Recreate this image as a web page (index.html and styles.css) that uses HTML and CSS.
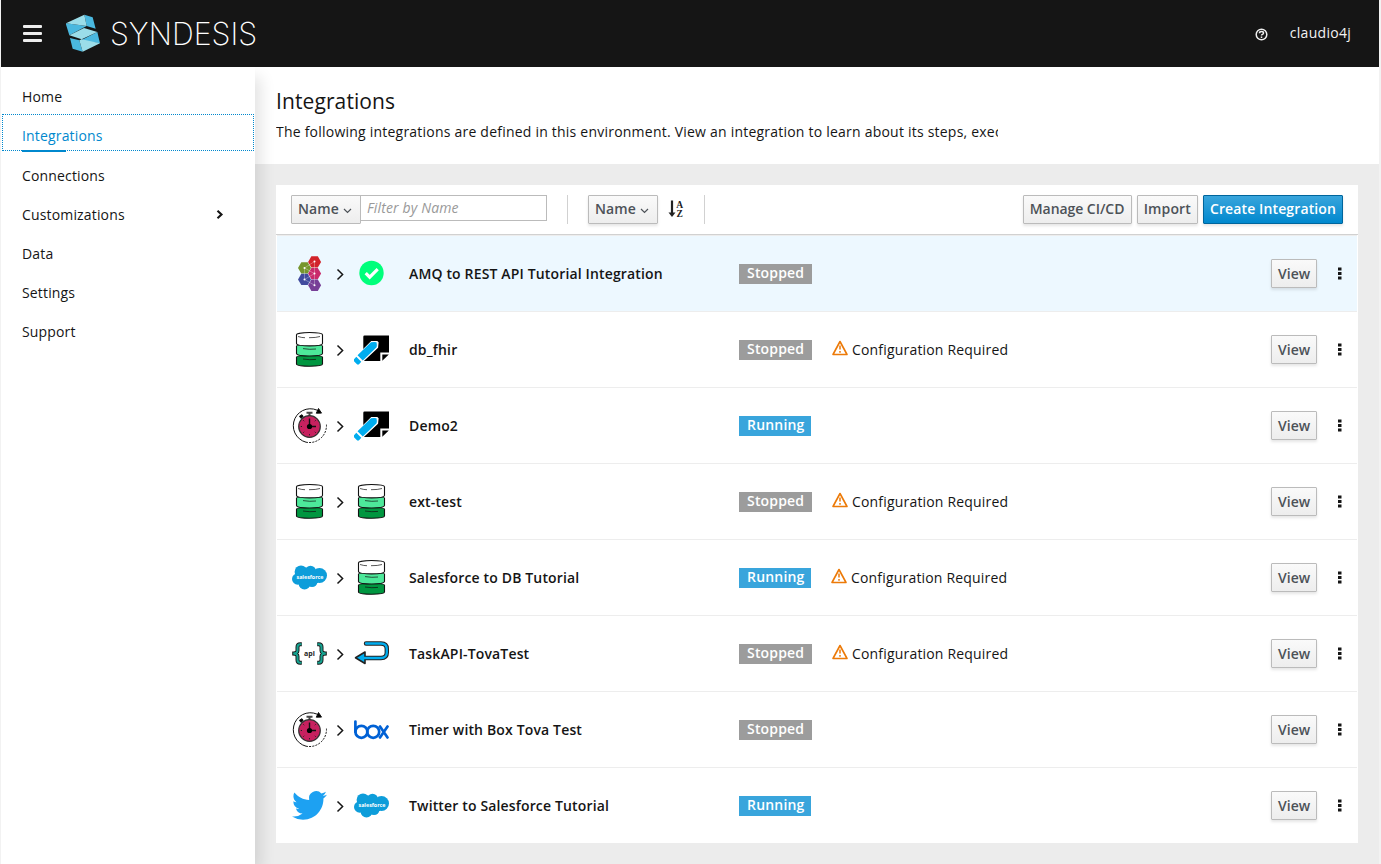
FILE: index.html
```html
<!DOCTYPE html>
<html lang="en">
<head>
<meta charset="utf-8">
<title>Syndesis</title>
<link rel="stylesheet" href="styles.css">
</head>
<body>
<svg class="defs" aria-hidden="true">
  <symbol id="db" viewBox="0 0 35 35">
    <g stroke="#111" stroke-width="1.100">
      <path d="M4.500 25c0-2 26-2 26 0v7c0 3-26 3-26 0z" fill="#009640"/>
      <path d="M4.500 14c0-2 26-2 26 0v7.500c0 3.300-26 3.300-26 0z" fill="#4de89a"/>
      <path d="M4.500 2.800c0-3 26-3 26 0v8.700c0 3.200-26 3.200-26 0z" fill="#fff"/>
      <path d="M6 4.500q4 1.300 7 1.200M17 5.700q7 .1 11-1.200M11 16.600q7 1.200 13 .4M11 27q7 1.200 13 .4" fill="none" stroke-width=".7"/>
    </g>
  </symbol>
  <symbol id="amq" viewBox="0 0 35 35">
    <path d="M3.300 0h6.400L13 5.700l-3.300 5.700H3.300L0 5.700z" transform="translate(16.100 .2)" fill="#d2232a"/>
    <path d="M3.300 0h6.400L13 5.700l-3.300 5.700H3.300L0 5.700z" transform="translate(6 6.200)" fill="#76962d"/>
    <path d="M3.300 0h6.400L13 5.700l-3.300 5.700H3.300L0 5.700z" transform="translate(16.100 11.900)" fill="#c92a6b"/>
    <path d="M3.300 0h6.400L13 5.700l-3.300 5.700H3.300L0 5.700z" transform="translate(6 17.700)" fill="#414b9e"/>
    <path d="M3.300 0h6.400L13 5.700l-3.300 5.700H3.300L0 5.700z" transform="translate(16.100 23.500)" fill="#773f97"/>
    <path d="M22.500 5.500L12.500 12v11.500l10 5.700v-11.500l-10-5.700M22.500 5.500v12l-10 6" fill="none" stroke="#fff" stroke-opacity=".5" stroke-width=".6"/>
    <g fill="#fff"><circle cx="22.500" cy="5.500" r="1"/><circle cx="12.500" cy="12" r="1"/><circle cx="22.500" cy="17.600" r="1"/><circle cx="12.500" cy="23.500" r="1"/><circle cx="22.500" cy="29.200" r="1"/></g>
  </symbol>
  <symbol id="ok" viewBox="0 0 35 35">
    <circle cx="17.500" cy="17" r="12.200" fill="#00ff7b"/>
    <path d="M11.700 17.200l4 4 8-8" fill="none" stroke="#fff" stroke-width="3.200"/>
  </symbol>
  <symbol id="log" viewBox="0 0 35 35">
    <path d="M10.500 3.500Q9.300 3.500 9.300 4.700V29h17V20.500h8.700V3.500z"/>
    <path d="M28.300 28.700v-6.300h6.500z"/>
    <path d="M0 27.500L5 22l12.500-12.500h5.500l1 1-.5 5L10 28l-5 5z" fill="#fff" stroke="#fff" stroke-width="1.200"/>
    <path d="M0 27.200l2.300-2.400 5 5-2.300 2.400q-1 .9-2 0L0 29.300zM3.500 23.300L17 10.300q3-.6 5.500-.1.700 2.500.1 5.100L8.800 28.500z" fill="#00adef"/>
  </symbol>
  <symbol id="timer" viewBox="0 0 35 35">
    <path d="M28.300 4A17 17 0 1 0 14 34.200" fill="none" stroke="#111" stroke-width="1"/>
    <path d="M14 34.200A17 17 0 0 0 34.400 16" fill="none" stroke="#111" stroke-width="1" stroke-dasharray="2 1.200"/>
    <path d="M26.500 .5l3 4.600-5.200.1zM7.500 8.200l2.500-1.500 1.200 1.800L9 10.500z" stroke="#111"/>
    <path d="M14.500 4.800h6M17.500 5v3" stroke="#444" stroke-width="2"/>
    <circle cx="17.500" cy="18.500" r="10.800" fill="#c7215f" stroke="#333" stroke-width="1.200"/>
    <path d="M17.500 10.500v8h6.500" fill="none" stroke="#111" stroke-width="1.400"/>
    <circle cx="17.500" cy="18.500" r="2.600"/>
    <path d="M17.500 27.300v-1.200M8.800 18.500H10M11.300 12.300l.9.900M23.700 12.300l-.9.900M11.300 24.700l.9-.9M23.700 24.700l-.9-.9" stroke="#222"/>
  </symbol>
  <symbol id="sf" viewBox="0 0 35 35">
    <g fill="#0d9dda"><circle cx="9" cy="11.800" r="6.400"/><circle cx="18.500" cy="11.200" r="5.500"/><circle cx="27.500" cy="15.500" r="7.500"/><circle cx="5.800" cy="19" r="5.800"/><circle cx="12.500" cy="23.500" r="5.900"/><circle cx="20" cy="21.500" r="5.500"/><path d="M8 10h18v13H8z"/></g>
    <text x="18" y="18.500" text-anchor="middle" textLength="27" lengthAdjust="spacingAndGlyphs" class="t-sf">salesforce</text>
  </symbol>
  <symbol id="api" viewBox="0 0 35 35">
    <g fill="none" stroke="#1a1a1a" stroke-width="4"><path d="M9.800 8.300H8.200Q5.500 8.300 5.500 11v3.500q0 3-5.300 3 5.300 0 5.300 3V24q0 2.700 2.700 2.700h1.600M25.200 8.300h1.600q2.700 0 2.700 2.700v3.500q0 3 5.300 3-5.300 0-5.300 3V24q0 2.700-2.700 2.700h-1.600"/></g>
    <g fill="none" stroke="#16a391" stroke-width="2.100"><path d="M9.500 8.300H8.200Q5.500 8.300 5.500 11v3.500q0 3-4.300 3 4.300 0 4.300 3V24q0 2.700 2.700 2.700h1.300M25.500 8.300h1.300q2.700 0 2.700 2.700v3.500q0 3 4.300 3-4.300 0-4.300 3V24q0 2.700-2.700 2.700h-1.300"/></g>
    <text x="17.500" y="20" text-anchor="middle" class="t-api">api</text>
  </symbol>
  <symbol id="ret" viewBox="0 0 35 35">
    <path d="M12 7.500h15q5.800 0 5.800 5.500v3.500q0 5.500-5.800 5.500H10" fill="none" stroke="#222" stroke-width="4.400" stroke-linecap="round"/>
    <path d="M11 16v11.500L1.500 21.800z" fill="#00adef" stroke="#222" stroke-width="1.600" stroke-linejoin="round"/>
    <path d="M12 7.500h15q5.800 0 5.800 5.500v3.500q0 5.500-5.800 5.500H10" fill="none" stroke="#00adef" stroke-width="2.300" stroke-linecap="round"/>
  </symbol>
  <symbol id="box" viewBox="0 0 35 35">
    <g fill="none" stroke="#0061d5" stroke-width="2.700" stroke-linecap="round"><path d="M1.400 9.500v10.500"/><circle cx="7.400" cy="19.800" r="6"/><circle cx="19.200" cy="19.800" r="6"/><path d="M26 14.500l7.500 11M33.500 14.500l-7.500 11"/></g>
  </symbol>
  <symbol id="tw" viewBox="0 0 24 24">
    <path d="M23.950 4.570a10 10 0 0 1-2.820.77 4.960 4.960 0 0 0 2.160-2.720c-.95.550-2 .95-3.130 1.180a4.920 4.920 0 0 0-8.380 4.480C7.690 8.100 4.070 6.130 1.640 3.160a4.820 4.820 0 0 0-.67 2.480c0 1.710.87 3.210 2.190 4.100a4.900 4.900 0 0 1-2.230-.62v.06a4.920 4.920 0 0 0 3.950 4.830 5 5 0 0 1-2.210.08 4.940 4.940 0 0 0 4.600 3.420A9.870 9.870 0 0 1 0 19.540a13.990 13.990 0 0 0 7.550 2.210c9.050 0 14-7.500 14-13.980 0-.21 0-.42-.02-.63a9.940 9.940 0 0 0 2.460-2.550z" fill="#1da1f2"/>
  </symbol>
  <symbol id="chev" viewBox="0 0 8 13"><path d="M1.500 1.500L6.600 6.500l-5.100 5" fill="none" stroke="#151515" stroke-width="1.500"/></symbol>
  <symbol id="down" viewBox="0 0 9 6"><path d="M1 1l3.500 3.500L8 1" fill="none" stroke="#4d5258" stroke-width="1.200"/></symbol>
  <symbol id="warn" viewBox="0 0 16 16"><path d="M8 1.500L15 14.500H1z" fill="none" stroke="#ec7a08" stroke-width="1.600" stroke-linejoin="round"/><path d="M8 5.500v4M8 11v1.700" stroke="#ec7a08" stroke-width="1.500"/></symbol>
  <symbol id="dots" viewBox="0 0 4 13"><path d="M0 .5h3.500v3H0zM0 5h3.500v3H0zM0 9.500h3.500v3H0z" fill="#151515"/></symbol>
</svg>

<div class="page">
  <header class="masthead">
    <div class="burger"><i></i><i></i><i></i></div>
    <svg class="logo" width="200" height="41" viewBox="0 0 200 41">
      <g transform="translate(-6 -5) scale(.3333)">
        <path d="M73 20l25 8 9 34-27-8zM17 46l63 8-52 28zM30 90l28 7 10 34-30-9zM112 72l8 34-60-8z" fill="#4ab8df"/>
        <path d="M17 46l56-26 7 34zM28 82l44-22 40 12-47 22zM58 97l7-3 55 12-52 25z" fill="#9bdde9"/>
      </g>
      <text x="44" y="31.500" textLength="147" lengthAdjust="spacingAndGlyphs" class="t-logo">SYNDESIS</text>
    </svg>
    <svg class="help" width="13" height="13" viewBox="0 0 13 13"><circle cx="6.500" cy="6.500" r="5.300" fill="none" stroke="#eee" stroke-width="1.500"/><path d="M4.500 5.200q0-1.700 2-1.700t2 1.500q0 1-1.100 1.400-.9.400-.9 1.100M6.500 8.500v1.500" fill="none" stroke="#eee" stroke-width="1.500"/></svg>
    <span class="user">claudio4j</span>
  </header>
  <div class="body">
    <nav class="sidebar">
      <a>Home</a>
      <a class="current">Integrations</a>
      <a>Connections</a>
      <a>Customizations<svg width="8" height="9" viewBox="0 0 8 9"><path d="M1.500 .8l4 3.700-4 3.700" fill="none" stroke="#151515" stroke-width="2.100"/></svg></a>
      <a>Data</a>
      <a>Settings</a>
      <a>Support</a>
    </nav>
    <main class="main">
      <section class="intro">
        <h1>Integrations</h1>
        <p>The following integrations are defined in this environment. View an integration to learn about its steps, exec</p>
      </section>
      <section class="card">
        <div class="toolbar">
          <button class="btn flat">Name<svg width="9" height="6"><use href="#down"/></svg></button>
          <input class="filter" placeholder="Filter by Name">
          <span class="rule"></span>
          <button class="btn">Name<svg width="9" height="6"><use href="#down"/></svg></button>
          <svg class="sort" width="17" height="18" viewBox="0 0 17 18"><path d="M4 .5V14" stroke="#222" stroke-width="2.200"/><path d="M.500 12.500h7L4 17z" fill="#222"/><text x="8.300" y="8" class="t-sort">A</text><text x="8.500" y="17" class="t-sort">Z</text></svg>
          <span class="rule"></span>
          <div class="actions">
            <button class="btn manage">Manage CI/CD</button>
            <button class="btn">Import</button>
            <button class="btn primary">Create Integration</button>
          </div>
        </div>
        <div class="row selected"><div class="flow"><svg><use href="#amq"/></svg><svg class="chev"><use href="#chev"/></svg><svg><use href="#ok"/></svg></div><b>AMQ to REST API Tutorial Integration</b><div class="state"><span class="tag">Stopped</span></div><button class="btn">View</button><svg class="dots"><use href="#dots"/></svg></div>
        <div class="row"><div class="flow"><svg><use href="#db"/></svg><svg class="chev"><use href="#chev"/></svg><svg><use href="#log"/></svg></div><b>db_fhir</b><div class="state"><span class="tag">Stopped</span><svg class="warn"><use href="#warn"/></svg>Configuration Required</div><button class="btn">View</button><svg class="dots"><use href="#dots"/></svg></div>
        <div class="row"><div class="flow"><svg><use href="#timer"/></svg><svg class="chev"><use href="#chev"/></svg><svg><use href="#log"/></svg></div><b>Demo2</b><div class="state"><span class="tag running">Running</span></div><button class="btn">View</button><svg class="dots"><use href="#dots"/></svg></div>
        <div class="row"><div class="flow"><svg><use href="#db"/></svg><svg class="chev"><use href="#chev"/></svg><svg><use href="#db"/></svg></div><b>ext-test</b><div class="state"><span class="tag">Stopped</span><svg class="warn"><use href="#warn"/></svg>Configuration Required</div><button class="btn">View</button><svg class="dots"><use href="#dots"/></svg></div>
        <div class="row"><div class="flow"><svg><use href="#sf"/></svg><svg class="chev"><use href="#chev"/></svg><svg><use href="#db"/></svg></div><b>Salesforce to DB Tutorial</b><div class="state"><span class="tag running">Running</span><svg class="warn"><use href="#warn"/></svg>Configuration Required</div><button class="btn">View</button><svg class="dots"><use href="#dots"/></svg></div>
        <div class="row"><div class="flow"><svg><use href="#api"/></svg><svg class="chev"><use href="#chev"/></svg><svg><use href="#ret"/></svg></div><b>TaskAPI-TovaTest</b><div class="state"><span class="tag">Stopped</span><svg class="warn"><use href="#warn"/></svg>Configuration Required</div><button class="btn">View</button><svg class="dots"><use href="#dots"/></svg></div>
        <div class="row"><div class="flow"><svg><use href="#timer"/></svg><svg class="chev"><use href="#chev"/></svg><svg><use href="#box"/></svg></div><b>Timer with Box Tova Test</b><div class="state"><span class="tag">Stopped</span></div><button class="btn">View</button><svg class="dots"><use href="#dots"/></svg></div>
        <div class="row"><div class="flow"><svg><use href="#tw"/></svg><svg class="chev"><use href="#chev"/></svg><svg><use href="#sf"/></svg></div><b>Twitter to Salesforce Tutorial</b><div class="state"><span class="tag running">Running</span></div><button class="btn">View</button><svg class="dots"><use href="#dots"/></svg></div>
      </section>
    </main>
  </div>
</div>
</body>
</html>
```
FILE: styles.css
```css
* { box-sizing: border-box; }
body {
  margin: 0;
  background: #f2f2f2;
  font-family: "Open Sans", sans-serif;
  font-size: 14px;
  line-height: 21px;
  letter-spacing: .18px;
  color: #151515;
  overflow: hidden;
}
svg text { letter-spacing: 0; }
.defs { display: none; }
.page { margin: 0 2px 0 1px; height: 864px; display: flex; flex-direction: column; }
.masthead {
  height: 67px;
  flex: none;
  background: #151515;
  display: flex;
  align-items: center;
  padding: 0 28px 0 22px;
  color: #f2f2f2;
}
.burger { display: flex; flex-direction: column; gap: 4px; width: 19px; margin-right: 24px; }
.burger i { height: 3px; background: #ededed; border-radius: 1px; }
.t-logo { font: 200 31.500px Inter, sans-serif; fill: #fff; }
.help { margin: 2px 22px 0 auto; }
.user { margin-top: -3px; letter-spacing: .28px; }
.body { flex: 1; min-height: 0; display: flex; }
.sidebar {
  width: 254px;
  flex: none;
  background: #fff;
  padding-top: 9px;
  box-shadow: 8px 8px 14px -2px rgba(3, 3, 3, .11);
  clip-path: inset(0 -30px 0 0);
  z-index: 1;
}
.sidebar a {
  display: flex;
  align-items: center;
  justify-content: space-between;
  height: 39px;
  margin: 0 1px;
  padding: 2px 30px 0 20px;
  letter-spacing: .16px;
}
.sidebar .current {
  position: relative;
  height: 37px;
  margin: -1px 1px 4px;
  padding: 5px 0 0 19px;
  color: #0088ce;
  border: 1px dotted #0088ce;
}
.sidebar .current::after {
  content: "";
  position: absolute;
  left: 19px;
  bottom: -2px;
  width: 44px;
  height: 2px;
  background: #0088ce;
}
.main { flex: 1; min-width: 0; background: #ececec; }
.intro { height: 97px; background: #fff; padding: 20px 21px 0; }
h1 { margin: 0; font-size: 21px; font-weight: 400; line-height: 28px; letter-spacing: .1px; }
.intro p { margin: 6px 0 0; width: 722px; white-space: nowrap; overflow: hidden; letter-spacing: .22px; }
.card { margin: 21px 21px 0; background: #fff; height: 658px; }
.toolbar {
  height: 50px;
  display: flex;
  align-items: flex-start;
  padding: 10px 15px 0;
  border-bottom: 1px solid #d1d1d1;
}
.btn {
  height: 29px;
  padding: 0 6px 2px;
  border: 1px solid #bbb;
  border-radius: 1px;
  background: linear-gradient(#fafafa, #ededed);
  color: #4d5258;
  font: 600 14px/26px "Open Sans", sans-serif;
  letter-spacing: .12px;
  box-shadow: 0 2px 3px rgba(3, 3, 3, .1);
  display: flex;
  align-items: center;
  gap: 5px;
  white-space: nowrap;
}
.btn.flat { box-shadow: none; }
.toolbar > .btn { width: 70px; gap: 4px; }
.btn.manage { width: 109px; letter-spacing: -.05px; }
.btn svg { margin-top: 4px; }
.primary { background: linear-gradient(#39a5dc, #0088ce); border-color: #00659c; color: #fff; }
.filter {
  width: 187px;
  height: 26px;
  margin-left: -1px;
  padding: 0 6px 2px;
  border: 1px solid #bbb;
  font: 14px "Open Sans", sans-serif;
  letter-spacing: .15px;
}
.filter::placeholder { font-style: italic; color: #999; }
.rule { width: 1px; height: 29px; background: #d1d1d1; margin: 0 20px; }
.sort { margin: 5px -1px 0 10px; }
.t-sort { font: bold 9.500px "Liberation Serif", serif; fill: #222; }
.actions { margin-left: auto; display: flex; gap: 5px; }
.row {
  height: 76px;
  margin: 0 1px;
  padding: 0 15px 0 15px;
  border-top: 1px solid #ededed;
  display: grid;
  grid-template-columns: 117px 330px 1fr auto 4px;
  align-items: center;
}
.row.selected { background: #edf8ff; }
.row b { font-weight: 600; letter-spacing: .15px; }
.flow { display: flex; align-items: center; }
.flow svg { width: 35px; height: 35px; }
.flow .chev { width: 8px; height: 13px; margin: 2px 10px 0 9px; }
.state { display: flex; align-items: center; }
.tag { width: 73px; height: 20px; padding: 0 0 0 8px; margin-right: 20px; background: #9c9c9c; color: #fff; font-weight: 600; line-height: 18px; }
.tag.running { width: 72px; background: #39a5dc; letter-spacing: .2px; }
.warn { width: 16px; height: 16px; margin: -3px 4px 0 0; }
.dots { width: 4px; height: 13px; }
.row .btn { width: 46px; margin-right: 21px; padding-bottom: 0; letter-spacing: 0; }
.t-sf { font: bold 5.800px "Open Sans", sans-serif; fill: #fff; }
.t-api { font: bold 7px "Open Sans", sans-serif; fill: #222; }
```
